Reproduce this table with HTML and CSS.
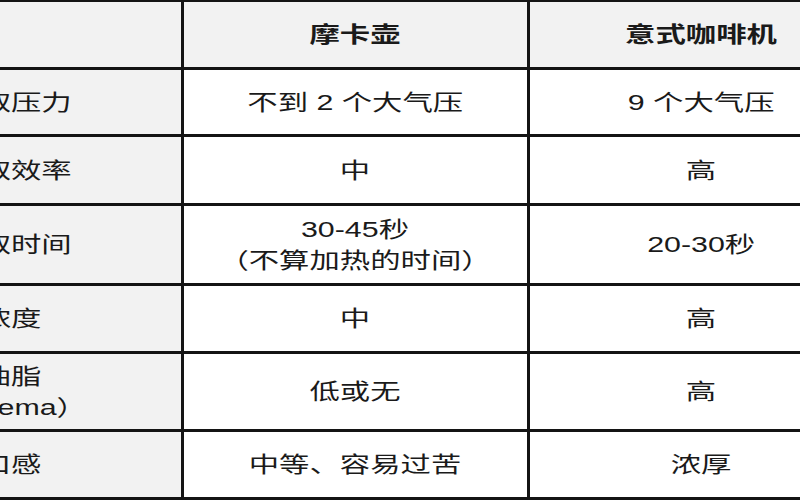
FILE: index.html
```html
<!DOCTYPE html>
<html lang="zh-CN">
<head>
<meta charset="utf-8">
<title>摩卡壶与意式咖啡机对比</title>
<link rel="stylesheet" href="styles.css">
</head>
<body>
<div class="table">
  <div class="cell head"><span class="t"></span></div>
  <div class="cell head"><span class="t">摩卡壶</span></div>
  <div class="cell head"><span class="t">意式咖啡机</span></div>

  <div class="cell label"><span class="t">萃取压力</span></div>
  <div class="cell"><span class="t">不到 2 个大气压</span></div>
  <div class="cell"><span class="t">9 个大气压</span></div>

  <div class="cell label"><span class="t">萃取效率</span></div>
  <div class="cell"><span class="t">中</span></div>
  <div class="cell"><span class="t">高</span></div>

  <div class="cell label"><span class="t">萃取时间</span></div>
  <div class="cell"><span class="t">30-45秒<br>（不算加热的时间）</span></div>
  <div class="cell"><span class="t">20-30秒</span></div>

  <div class="cell label"><span class="t">浓度</span></div>
  <div class="cell"><span class="t">中</span></div>
  <div class="cell"><span class="t">高</span></div>

  <div class="cell label"><span class="t">油脂<br>（Crema）</span></div>
  <div class="cell"><span class="t">低或无</span></div>
  <div class="cell"><span class="t">高</span></div>

  <div class="cell label"><span class="t">口感</span></div>
  <div class="cell"><span class="t">中等、容易过苦</span></div>
  <div class="cell"><span class="t">浓厚</span></div>
</div>
</body>
</html>
```
FILE: styles.css
```css
html, body {
  margin: 0;
  padding: 0;
  background: #ffffff;
  overflow: hidden;
}

body {
  width: 800px;
  height: 500px;
  font-family: "Liberation Sans", "Noto Sans CJK SC", sans-serif;
  font-size: 22px;
  color: #1a1a1a;
}

.table {
  display: grid;
  grid-template-columns: 339px 343px 343px;
  grid-template-rows: 65px 64px 66px 77px 65px 75px 65px;
  gap: 3px;
  padding: 2px 0 3px;
  margin-left: -158px;
  width: max-content;
  background: #141414;
}

.cell {
  display: flex;
  align-items: center;
  justify-content: center;
  background: #ffffff;
  text-align: center;
}

.head,
.label {
  background: #f2f2f2;
}

.head {
  font-weight: 700;
}

.t {
  display: inline-block;
  line-height: 31px;
  white-space: nowrap;
  transform: scaleX(1.38);
}
```
